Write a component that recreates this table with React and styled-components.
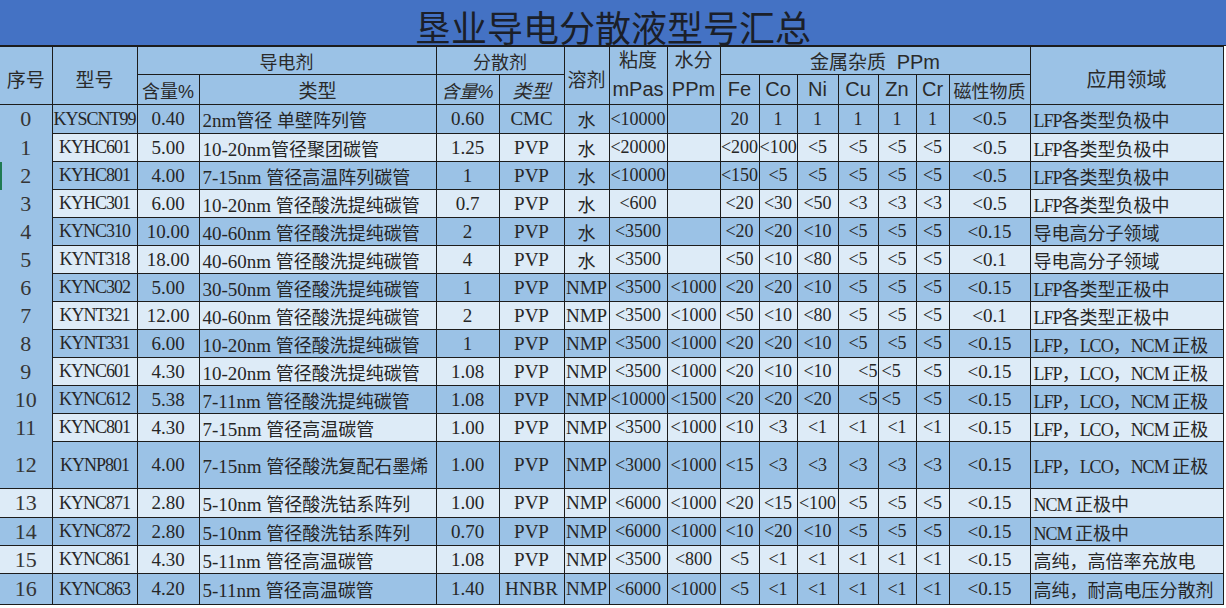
import React from 'react';
import styled, { createGlobalStyle } from 'styled-components';

const GlobalStyle = createGlobalStyle`
  body {
    margin: 0;
    background: #ffffff;
  }
`;

const colors = {
  title: '#4472c4',
  dark: '#9bc2e6',
  light: '#ddebf7',
  line: '#1c1c1c',
  text: '#262626',
};

const Sheet = styled.div`
  width: 1226px;
  height: 608px;
  overflow: hidden;
  background: #ffffff;
`;

const TitleBar = styled.div`
  box-sizing: border-box;
  height: 46px;
  padding-top: 7px;
  background: ${colors.title};
  border-bottom: 1px solid ${colors.line};
  text-align: center;
  font-family: 'Noto Sans CJK SC', sans-serif;
  font-size: 36px;
  line-height: 38px;
  color: #1b1f29;
`;

const Grid = styled.table`
  width: 1223px;
  table-layout: fixed;
  border-collapse: collapse;
  border-spacing: 0;
`;

const HeadRow = styled.tr`
  height: ${props => props.$h}px;
`;

const HeadCell = styled.th`
  padding: ${props => (props.$drop ? '6px 0 0' : '0')};
  background: ${colors.dark};
  border: 1px solid ${colors.line};
  border-left-style: ${props => (props.$first ? 'hidden' : 'solid')};
  font-family: 'Liberation Sans', 'Noto Sans CJK SC', sans-serif;
  font-weight: normal;
  font-size: ${props => props.$size || 19}px;
  font-style: ${props => (props.$italic ? 'italic' : 'normal')};
  color: #2a2a2a;
  white-space: nowrap;
  overflow: hidden;
  text-align: center;
`;

const HeadLine = styled.span`
  display: block;
  height: ${props => props.$h}px;
  line-height: ${props => props.$h}px;
  font-size: ${props => props.$size || 19}px;
`;

const Unit = styled.span`
  font-size: 20px;
`;

const Row = styled.tr`
  height: ${props => props.$h}px;
`;

const Cell = styled.td`
  padding: 0 ${props => (props.$align === 'left' ? '3px' : '0')};
  background: ${props => (props.$tone === 'dark' ? colors.dark : colors.light)};
  border: 1px solid ${colors.line};
  text-align: ${props => props.$align || 'center'};
  font-family: 'Liberation Serif', 'Noto Sans CJK SC', serif;
  font-size: ${props => props.$size || 19}px;
  letter-spacing: ${props => props.$tight || 0}px;
  color: ${colors.text};
  white-space: nowrap;
  overflow: hidden;
`;

const SerialCell = styled(Cell)`
  border-left-style: hidden;
  border-bottom-style: ${props => (props.$merged ? 'hidden' : 'solid')};
  font-size: 22px;
  color: #353535;
  box-shadow: ${props => (props.$mark ? 'inset 2px 0 0 #1f7a52' : 'none')};
`;

// chinese runs are set a touch smaller than the latin ones, like the sheet's song face
const Han = styled.span`
  font-family: 'Noto Sans CJK SC', sans-serif;
  font-size: 18px;
  letter-spacing: 0;
`;

const hanRun = /([\u2e80-\u9fff\u3000-\u303f\uff00-\uffef]+)/;

const Mixed = ({ text }) =>
  text
    .split(hanRun)
    .filter(Boolean)
    .map((part, i) => (hanRun.test(part) ? <Han key={i}>{part}</Han> : part));

const widths = [52, 85, 62, 237, 63, 65, 45, 58, 53, 39, 38, 41, 40, 38, 33, 81, 193];

const rows = [
  ['KYSCNT99', '0.40', '2nm管径 单壁阵列管', '0.60', 'CMC', '水', '<10000', '', '20', '1', '1', '1', '1', '1', '<0.5', 'LFP各类型负极中'],
  ['KYHC601', '5.00', '10-20nm管径聚团碳管', '1.25', 'PVP', '水', '<20000', '', '<200', '<100', '<5', '<5', '<5', '<5', '<0.5', 'LFP各类型负极中'],
  ['KYHC801', '4.00', '7-15nm 管径高温阵列碳管', '1', 'PVP', '水', '<10000', '', '<150', '<5', '<5', '<5', '<5', '<5', '<0.5', 'LFP各类型负极中'],
  ['KYHC301', '6.00', '10-20nm 管径酸洗提纯碳管', '0.7', 'PVP', '水', '<600', '', '<20', '<30', '<50', '<3', '<3', '<3', '<0.5', 'LFP各类型负极中'],
  ['KYNC310', '10.00', '40-60nm 管径酸洗提纯碳管', '2', 'PVP', '水', '<3500', '', '<20', '<20', '<10', '<5', '<5', '<5', '<0.15', '导电高分子领域'],
  ['KYNT318', '18.00', '40-60nm 管径酸洗提纯碳管', '4', 'PVP', '水', '<3500', '', '<50', '<10', '<80', '<5', '<5', '<5', '<0.1', '导电高分子领域'],
  ['KYNC302', '5.00', '30-50nm 管径酸洗提纯碳管', '1', 'PVP', 'NMP', '<3500', '<1000', '<20', '<20', '<10', '<5', '<5', '<5', '<0.15', 'LFP各类型正极中'],
  ['KYNT321', '12.00', '40-60nm 管径酸洗提纯碳管', '2', 'PVP', 'NMP', '<3500', '<1000', '<50', '<10', '<80', '<5', '<5', '<5', '<0.1', 'LFP各类型正极中'],
  ['KYNT331', '6.00', '10-20nm 管径酸洗提纯碳管', '1', 'PVP', 'NMP', '<3500', '<1000', '<20', '<20', '<10', '<5', '<5', '<5', '<0.15', 'LFP，LCO，NCM 正极'],
  ['KYNC601', '4.30', '10-20nm 管径酸洗提纯碳管', '1.08', 'PVP', 'NMP', '<3500', '<1000', '<20', '<10', '<10', '<5', '<5', '<5', '<0.15', 'LFP，LCO，NCM 正极'],
  ['KYNC612', '5.38', '7-11nm 管径酸洗提纯碳管', '1.08', 'PVP', 'NMP', '<10000', '<1500', '<20', '<20', '<20', '<5', '<5', '<5', '<0.15', 'LFP，LCO，NCM 正极'],
  ['KYNC801', '4.30', '7-15nm 管径高温碳管', '1.00', 'PVP', 'NMP', '<3500', '<1000', '<10', '<3', '<1', '<1', '<1', '<1', '<0.15', 'LFP，LCO，NCM 正极'],
  ['KYNP801', '4.00', '7-15nm 管径酸洗复配石墨烯', '1.00', 'PVP', 'NMP', '<3000', '<1000', '<15', '<3', '<3', '<3', '<3', '<3', '<0.15', 'LFP，LCO，NCM 正极'],
  ['KYNC871', '2.80', '5-10nm 管径酸洗钴系阵列', '1.00', 'PVP', 'NMP', '<6000', '<1000', '<20', '<15', '<100', '<5', '<5', '<5', '<0.15', 'NCM 正极中'],
  ['KYNC872', '2.80', '5-10nm 管径酸洗钴系阵列', '0.70', 'PVP', 'NMP', '<6000', '<1000', '<10', '<20', '<10', '<5', '<5', '<5', '<0.15', 'NCM 正极中'],
  ['KYNC861', '4.30', '5-11nm 管径高温碳管', '1.08', 'PVP', 'NMP', '<3500', '<800', '<5', '<1', '<1', '<1', '<1', '<1', '<0.15', '高纯，高倍率充放电'],
  ['KYNC863', '4.20', '5-11nm 管径高温碳管', '1.40', 'HNBR', 'NMP', '<6000', '<1000', '<5', '<1', '<1', '<1', '<1', '<1', '<0.15', '高纯，耐高电压分散剂'],
];

const rowHeights = [29, 28, 28, 28, 28, 28, 28, 28, 28, 28, 28, 28, 47, 29, 28, 28, 31];

// excel quirks: a few cells sit off-centre in the source sheet
const quirks = {
  '9-11': 'right',
  '9-12': 'left',
  '10-11': 'right',
  '10-12': 'left',
};

const alignFor = (rowIndex, colIndex) => {
  if (colIndex === 2 || colIndex === 15) return 'left';
  return quirks[`${rowIndex}-${colIndex}`] || 'center';
};

// narrow columns keep 18px so values like <200 still fit
const sizeFor = colIndex => {
  if (colIndex === 0 || colIndex === 15) return 18;
  if (colIndex >= 6 && colIndex <= 13) return 18;
  return 19;
};

const tightFor = colIndex => (colIndex === 0 || colIndex === 15 ? -1 : 0);

const App = () => {
  return (
    <Sheet>
      <GlobalStyle />
      <TitleBar>垦业导电分散液型号汇总</TitleBar>
      <Grid>
        <colgroup>
          {widths.map((w, i) => (
            <col key={i} style={{ width: w }} />
          ))}
        </colgroup>
        <thead>
          <HeadRow $h={28}>
            <HeadCell rowSpan={2} $first $drop>序号</HeadCell>
            <HeadCell rowSpan={2} $drop>型号</HeadCell>
            <HeadCell colSpan={2} $size={18}>导电剂</HeadCell>
            <HeadCell colSpan={2} $size={18}>分散剂</HeadCell>
            <HeadCell rowSpan={2} $drop>溶剂</HeadCell>
            <HeadCell rowSpan={2}>
              <HeadLine $h={27}>粘度</HeadLine>
              <HeadLine $h={30} $size={20}>mPas</HeadLine>
            </HeadCell>
            <HeadCell rowSpan={2}>
              <HeadLine $h={27}>水分</HeadLine>
              <HeadLine $h={30} $size={20}>PPm</HeadLine>
            </HeadCell>
            <HeadCell colSpan={7}>
              金属杂质&nbsp; <Unit>PPm</Unit>
            </HeadCell>
            <HeadCell rowSpan={2} $size={20} $drop>应用领域</HeadCell>
          </HeadRow>
          <HeadRow $h={30}>
            <HeadCell $size={18}>含量%</HeadCell>
            <HeadCell $size={19}>类型</HeadCell>
            <HeadCell $size={18} $italic>含量%</HeadCell>
            <HeadCell $size={19} $italic>类型</HeadCell>
            <HeadCell $size={20}>Fe</HeadCell>
            <HeadCell $size={20}>Co</HeadCell>
            <HeadCell $size={20}>Ni</HeadCell>
            <HeadCell $size={20}>Cu</HeadCell>
            <HeadCell $size={20}>Zn</HeadCell>
            <HeadCell $size={20}>Cr</HeadCell>
            <HeadCell $size={18}>磁性物质</HeadCell>
          </HeadRow>
        </thead>
        <tbody>
          {rows.map((row, r) => {
            const tone = r % 2 === 0 ? 'dark' : 'light';
            return (
              <Row key={r} $h={rowHeights[r]}>
                <SerialCell
                  $tone={r <= 12 ? 'dark' : tone}
                  $merged={r < 12}
                  $mark={r === 2}
                >
                  {r}
                </SerialCell>
                {row.map((value, c) => (
                  <Cell
                    key={c}
                    $tone={tone}
                    $align={alignFor(r, c)}
                    $size={sizeFor(c)}
                    $tight={tightFor(c)}
                  >
                    <Mixed text={value} />
                  </Cell>
                ))}
              </Row>
            );
          })}
        </tbody>
      </Grid>
    </Sheet>
  );
};

export default App;
